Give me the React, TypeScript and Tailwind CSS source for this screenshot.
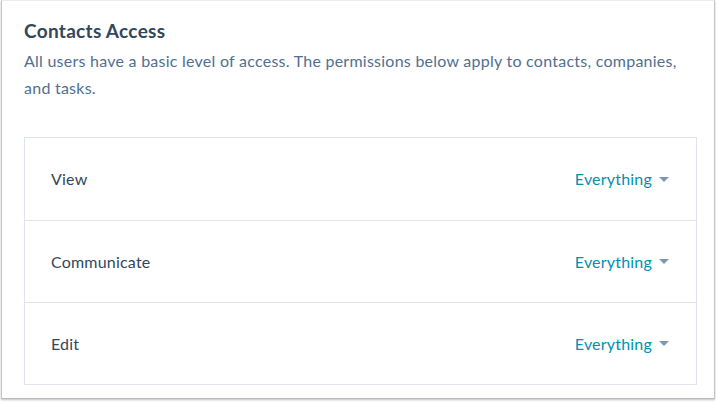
import type { ReactNode } from 'react';

const ROWS = ['View', 'Communicate', 'Edit'];

function Caret(): ReactNode {
  return (
    <svg width="10" height="6" viewBox="0 0 10 6" className="ml-[7px] mt-[1px]">
      <path d="M0 0 L10 0 L5 5 Z" fill="#7c98b6" />
    </svg>
  );
}

export default function App(): ReactNode {
  return (
    <div className="w-[716px] h-[404px] bg-white font-['Lato','Open_Sans',sans-serif]">
      <div className="w-[714px] h-[399px] ml-[1px] border-l border-r border-b border-t border-l-[#c4c4c4] border-r-[#c4c4c4] border-b-[#b8b8b8] border-t-[#ececec] shadow-[0_1px_2px_rgba(0,0,0,0.25)] pl-[22px] pr-[17px] pt-[18px]">
        <h2 className="text-[19px] leading-[24px] font-bold tracking-[0.3px] text-[#33475b]">Contacts Access</h2>
        <p className="mt-[4px] text-[16px] leading-[27px] tracking-[0.25px] text-[#516f90]">
          All users have a basic level of access. The permissions below apply to contacts, companies, and tasks.
        </p>
        <div className="mt-[36px] border border-[#dfe3eb]">
          {ROWS.map((label, i) => (
            <div
              key={label}
              className={`flex items-center justify-between h-[82px] pl-[26px] pr-[27px] ${i > 0 ? 'border-t border-[#dfe3eb]' : ''}`}
            >
              <span className="text-[16px] tracking-[0.2px] text-[#33475b]">{label}</span>
              <button className="flex items-center text-[16px] tracking-[0.2px] text-[#0091ae]">
                Everything
                <Caret />
              </button>
            </div>
          ))}
        </div>
      </div>
    </div>
  );
}
